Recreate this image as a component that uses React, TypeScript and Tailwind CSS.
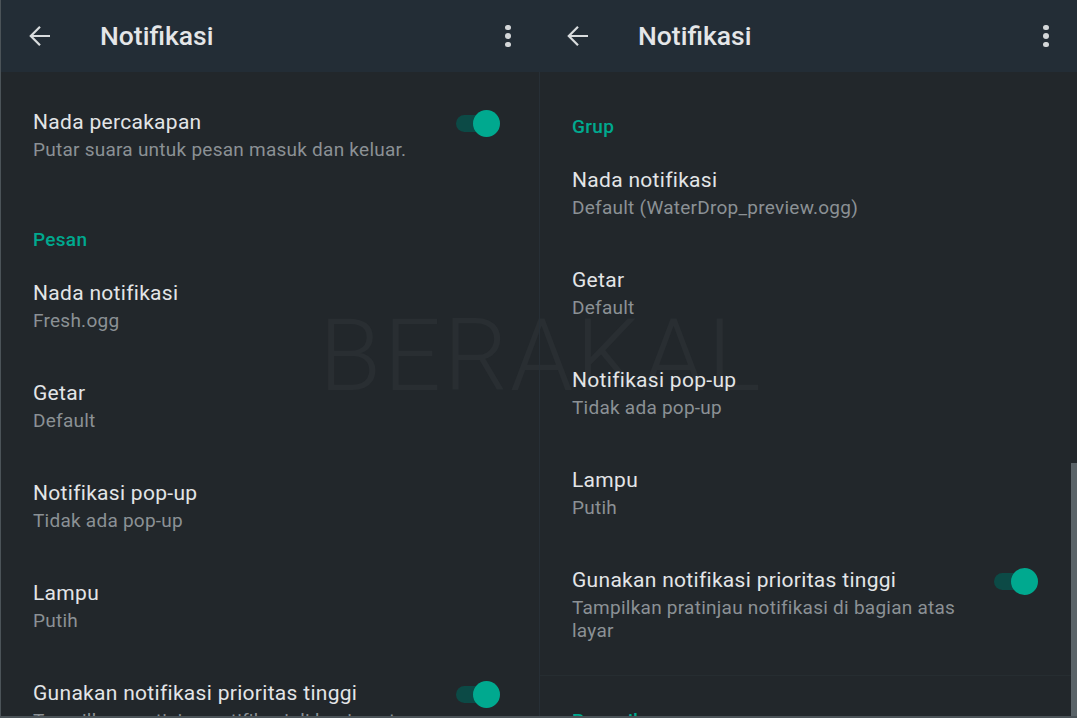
import React from "react";

type Item = { title: string; sub: string; toggle?: boolean };

const leftItems: Item[] = [
  { title: "Nada notifikasi", sub: "Fresh.ogg" },
  { title: "Getar", sub: "Default" },
  { title: "Notifikasi pop-up", sub: "Tidak ada pop-up" },
  { title: "Lampu", sub: "Putih" },
  {
    title: "Gunakan notifikasi prioritas tinggi",
    sub: "Tampilkan pratinjau notifikasi di bagian atas layar",
    toggle: true,
  },
];

const rightItems: Item[] = [
  { title: "Nada notifikasi", sub: "Default (WaterDrop_preview.ogg)" },
  { title: "Getar", sub: "Default" },
  { title: "Notifikasi pop-up", sub: "Tidak ada pop-up" },
  { title: "Lampu", sub: "Putih" },
];

const Toggle = () => (
  <div className="relative w-[44px] h-[30px] shrink-0">
    <div className="absolute left-0 top-[7px] w-[36px] h-[17px] rounded-full bg-[#0c4a46]" />
    <div className="absolute right-0 top-[2px] w-[27px] h-[27px] rounded-full bg-[#00a98f]" />
  </div>
);

const Header = () => (
  <div className="h-[72px] shrink-0 bg-[#232d36] flex items-center pl-[28px] pr-[27px]">
    <svg width="22" height="22" viewBox="0 0 22 22" className="text-[#d9dcde]">
      <path
        d="M21 11H2M11 1.8L1.8 11l9.2 9.2"
        fill="none"
        stroke="currentColor"
        strokeWidth="2.2"
      />
    </svg>
    <div className="ml-[49px] text-[26.5px] font-medium text-[#e4e6e8] leading-none">
      Notifikasi
    </div>
    <div className="ml-auto flex flex-col gap-[3px] items-center w-[8px]">
      <span className="w-[5.5px] h-[5.5px] rounded-full bg-[#d4d7d9]" />
      <span className="w-[5.5px] h-[5.5px] rounded-full bg-[#d4d7d9]" />
      <span className="w-[5.5px] h-[5.5px] rounded-full bg-[#d4d7d9]" />
    </div>
  </div>
);

const Row = ({ item }: { item: Item }) => (
  <div className="flex items-start gap-[20px]">
    <div className="flex-1">
      <div className="text-[21px] leading-[28px] tracking-[0.3px] text-[#e3e5e7]">
        {item.title}
      </div>
      <div className="mt-[2px] text-[19px] leading-[23px] tracking-[0.25px] text-[#8b9195]">
        {item.sub}
      </div>
    </div>
    {item.toggle && <Toggle />}
  </div>
);

const Label = ({ text }: { text: string }) => (
  <div className="text-[19px] leading-[24px] tracking-[0.3px] font-medium text-[#00a98f]">
    {text}
  </div>
);

export default function App() {
  return (
    <div
      className="relative w-[1077px] h-[718px] overflow-hidden bg-[#22272b] flex border-l border-b-2 border-[#4b5358]"
      style={{ fontFamily: "Roboto, 'Noto Sans', sans-serif" }}
    >
      {/* watermark, behind the lists */}
      <div className="absolute left-[318px] top-[296px] text-[101px] leading-[120px] font-light text-[#292e32] tracking-[2.5px] pointer-events-none select-none">
        BERAKAL
      </div>

      {/* left panel */}
      <div className="relative w-[538px] h-full flex flex-col overflow-hidden">
        <Header />
        <div className="flex-1 pl-[32px] pr-[39px] pt-[36px]">
          <div className="h-[120px]">
            <Row
              item={{
                title: "Nada percakapan",
                sub: "Putar suara untuk pesan masuk dan keluar.",
                toggle: true,
              }}
            />
          </div>
          <Label text="Pesan" />
          <div className="mt-[27px]">
            {leftItems.map((it, i) => (
              <div key={i} className="h-[100px]">
                <Row item={it} />
              </div>
            ))}
          </div>
        </div>
      </div>

      {/* right panel */}
      <div className="relative flex-1 h-full flex flex-col overflow-hidden">
        <Header />
        <div className="flex-1 border-l border-[#272f36]">
          <div className="pl-[32px] pr-[39px] pt-[43px]">
            <Label text="Grup" />
            <div className="mt-[27px]">
              {rightItems.map((it, i) => (
                <div key={i} className="h-[100px]">
                  <Row item={it} />
                </div>
              ))}
              <div className="h-[109px]">
                <Row
                  item={{
                    title: "Gunakan notifikasi prioritas tinggi",
                    sub: "Tampilkan pratinjau notifikasi di bagian atas layar",
                    toggle: true,
                  }}
                />
              </div>
            </div>
          </div>
          <div className="border-t border-[#262d31]" />
          <div className="pl-[32px] pt-[33px]">
            <Label text="Panggilan" />
          </div>
        </div>
        <div className="absolute right-0 top-[463px] bottom-0 w-[6px] bg-[#5a6368]" />
      </div>
    </div>
  );
}
